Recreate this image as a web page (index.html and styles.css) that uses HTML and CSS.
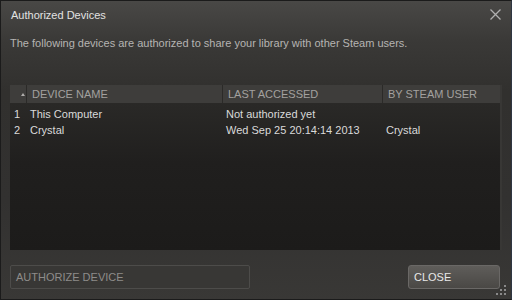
FILE: index.html
```html
<!DOCTYPE html>
<html>
<head>
<meta charset="utf-8">
<link rel="stylesheet" href="styles.css">
</head>
<body>
<div class="window">
  <div class="titlebar">
    <span class="title">Authorized Devices</span>
    <svg class="close-x" width="11" height="11" viewBox="0 0 11 11"><path d="M0.5 0.5 L10.5 10.5 M10.5 0.5 L0.5 10.5" stroke="#b0b0b0" stroke-width="1.3" fill="none"/></svg>
  </div>
  <div class="desc">The following devices are authorized to share your library with other Steam users.</div>
  <div class="panel">
    <div class="thead">
      <div class="th th-sort"><span class="arrow"></span></div>
      <div class="th th-name">DEVICE NAME</div>
      <div class="th th-last">LAST ACCESSED</div>
      <div class="th th-user">BY STEAM USER</div>
    </div>
    <div class="tbody">
      <div class="tr">
        <div class="td td-num">1</div>
        <div class="td td-name">This Computer</div>
        <div class="td td-last">Not authorized yet</div>
        <div class="td td-user"></div>
      </div>
      <div class="tr">
        <div class="td td-num">2</div>
        <div class="td td-name">Crystal</div>
        <div class="td td-last">Wed Sep 25 20:14:14 2013</div>
        <div class="td td-user">Crystal</div>
      </div>
    </div>
  </div>
  <div class="footer">
    <div class="auth-input">AUTHORIZE DEVICE</div>
    <div class="close-btn">CLOSE</div>
  </div>
  <svg class="grip" width="12" height="12" viewBox="0 0 12 12">
    <rect x="8" y="0" width="2" height="2" fill="#8a8a8a"/>
    <rect x="4" y="4" width="2" height="2" fill="#8a8a8a"/>
    <rect x="8" y="4" width="2" height="2" fill="#8a8a8a"/>
    <rect x="0" y="8" width="2" height="2" fill="#8a8a8a"/>
    <rect x="4" y="8" width="2" height="2" fill="#8a8a8a"/>
    <rect x="8" y="8" width="2" height="2" fill="#8a8a8a"/>
  </svg>
</div>
</body>
</html>
```
FILE: styles.css
```css
html, body {
  margin: 0;
  padding: 0;
  background: #1e1e1e;
}
.window {
  position: relative;
  width: 512px;
  height: 300px;
  box-sizing: border-box;
  border: 1px solid #1b1b1b;
  border-right-color: #2f3642;
  background: linear-gradient(#494846 0px, #3a3937 40px, #31302e 90px, #323130 200px, #393836 300px);
  font-family: "Liberation Sans", Arial, sans-serif;
  font-size: 11px;
  display: flex;
  flex-direction: column;
}
.titlebar {
  height: 28px;
  display: flex;
  align-items: center;
  justify-content: space-between;
  padding: 0 10px 0 10px;
}
.title {
  color: #e2e2e2;
  line-height: 13px;
}
.close-x {
  display: block;
  margin-top: -1px;
}
.desc {
  margin-top: 7px;
  padding-left: 9px;
  line-height: 14px;
  color: #b6b4b2;
}
.panel {
  margin: 35px 0 0 9px;
  width: 492px;
  height: 165px;
  box-sizing: border-box;
  padding-right: 2px;
  background: #383735;
  display: flex;
  flex-direction: column;
}
.thead {
  height: 18px;
  display: flex;
  background: #3e3d3b;
  color: #a3a19f;
}
.th {
  line-height: 18px;
  box-sizing: border-box;
  border-right: 1px solid #2b2a28;
  padding-left: 5px;
}
.th-sort {
  width: 17px;
  padding-left: 0;
  padding-right: 1px;
  display: flex;
  align-items: center;
  justify-content: flex-end;
}
.arrow {
  width: 0;
  height: 0;
  border-left: 2.5px solid transparent;
  border-right: 2.5px solid transparent;
  border-bottom: 3px solid #b0aeac;
}
.th-name { width: 196px; }
.th-last { width: 160px; }
.th-user { flex: 1; border-right: none; }
.tbody {
  flex: 1;
  background: linear-gradient(#2a2927 0px, #201f1e 60px, #1c1b1a 100%);
  padding-top: 3px;
  color: #dadada;
}
.tr {
  display: flex;
  height: 16px;
  line-height: 16px;
}
.td-num { width: 20px; padding-left: 4px; box-sizing: border-box; }
.td-name { width: 196px; }
.td-last { width: 160px; }
.td-user { flex: 1; }
.footer {
  margin-top: 15px;
  display: flex;
  justify-content: space-between;
  padding: 0 11px 0 9px;
}
.auth-input {
  width: 240px;
  height: 24px;
  box-sizing: border-box;
  border: 1px solid #4d4c4a;
  border-radius: 2px;
  background: #383735;
  color: #8e8c8a;
  line-height: 22px;
  padding-left: 5px;
}
.close-btn {
  width: 92px;
  height: 24px;
  box-sizing: border-box;
  border: 1px solid #6a6866;
  border-radius: 3px;
  background: linear-gradient(#5f5d5a, #4a4845);
  color: #e8e8e8;
  line-height: 22px;
  padding-left: 5px;
}
.grip {
  position: absolute;
  right: 3px;
  bottom: 2px;
}
```
